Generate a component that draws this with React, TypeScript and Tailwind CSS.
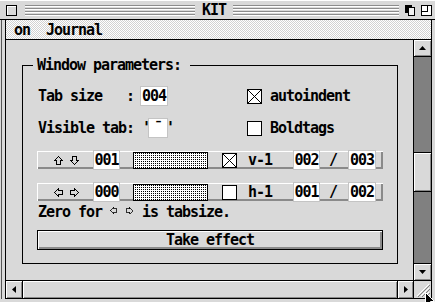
import React from "react";

const font =
  "font-['DejaVu_Sans_Mono',monospace] font-bold text-[15px] leading-4 tracking-[-1.03px] text-black";

type Dir = "up" | "down" | "left" | "right";

function Arrow({ dir, size = 9 }: { dir: Dir; size?: number }) {
  const rot = { up: 0, right: 90, down: 180, left: 270 }[dir];
  return (
    <svg width={size} height={size} viewBox="0 0 9 9" shapeRendering="crispEdges" className="block shrink-0">
      <path
        d="M4.5 0.5 L8.5 4.5 L6.5 4.5 L6.5 8.5 L2.5 8.5 L2.5 4.5 L0.5 4.5 Z"
        fill="none"
        stroke="#000"
        transform={`rotate(${rot} 4.5 4.5)`}
      />
    </svg>
  );
}

function Field({ className = "", children }: { className?: string; children: React.ReactNode }) {
  return (
    <span className={`h-[20px] shrink-0 flex items-center justify-center bg-white border border-[#c4c4c4] ${className}`}>
      {children}
    </span>
  );
}

function Check({ on }: { on?: boolean }) {
  return (
    <span className="w-[15px] h-[15px] shrink-0 border border-black bg-white flex">
      {on && (
        <svg width="13" height="13" viewBox="0 0 13 13" className="block">
          <path d="M0 0L13 13M13 0L0 13" stroke="#000" strokeWidth="1" />
        </svg>
      )}
    </span>
  );
}

function ParamRow(props: {
  arrows: [Dir, Dir];
  pos: string;
  checked?: boolean;
  label: string;
  a: string;
  b: string;
}) {
  return (
    <div className="mt-[12px] h-[20px] flex items-center">
      <div className="w-[346px] h-[18px] flex items-center bg-[#d9d9d9] shadow-[inset_1px_1px_0_#fff,inset_-2px_-2px_0_#8a8a8a]">
        <span className="w-[56px] h-full shrink-0 flex items-center pl-[17px] gap-[7px]">
          <Arrow dir={props.arrows[0]} />
          <Arrow dir={props.arrows[1]} />
        </span>
        <Field className="w-[27px]">{props.pos}</Field>
        <span className="ml-[13px] w-[75px] h-[17px] shrink-0 border border-black bg-[conic-gradient(#000_0_25%,#fff_0)] bg-size-[2px_2px]" />
        <span className="ml-[14px] flex">
          <Check on={props.checked} />
        </span>
        <span className="ml-[11px] w-[24px] shrink-0">{props.label}</span>
        <Field className="ml-[21px] w-[27px]">{props.a}</Field>
        <span className="ml-[9px] w-[8px] shrink-0">/</span>
        <Field className="ml-[11px] w-[28px]">{props.b}</Field>
      </div>
    </div>
  );
}

const lines =
  "h-[11px] bg-[repeating-linear-gradient(to_bottom,#8c8c8c_0px,#8c8c8c_1px,#fff_1px,#fff_2px,transparent_2px,transparent_3px)]";
const bevel = "bg-[#d9d9d9] shadow-[inset_1px_1px_0_#fff,inset_-1px_-1px_0_#8a8a8a]";

export default function App() {
  return (
    <div className={`relative w-[435px] h-[302px] overflow-hidden bg-[#d9d9d9] flex flex-col ${font}`}>
      {/* title bar */}
      <div className="h-[20px] shrink-0 flex items-center border-t border-t-white border-b border-b-black">
        <div className="ml-[6px] w-[11px] h-[11px] shrink-0 border border-black bg-[#d9d9d9] shadow-[inset_1px_1px_0_#fff]" />
        <div className={`ml-[8px] w-[170px] shrink-0 ${lines}`} />
        <div className="w-[38px] shrink-0 text-center">KIT</div>
        <div className={`w-[166px] shrink-0 ${lines}`} />
        <svg width="10" height="11" viewBox="0 0 10 11" shapeRendering="crispEdges" className="ml-[6px] block shrink-0">
          <rect x="0" y="0" width="7" height="8" fill="#000" />
          <rect x="3.5" y="2.5" width="6" height="8" fill="#f2f2f2" stroke="#000" />
        </svg>
        <svg width="11" height="11" viewBox="0 0 11 11" shapeRendering="crispEdges" className="ml-[6px] block shrink-0">
          <rect x="0.5" y="0.5" width="10" height="10" fill="#fff" stroke="#000" />
          <path d="M1 6.5H6.5V1" fill="none" stroke="#000" />
        </svg>
      </div>

      <div className="flex-1 flex min-h-0">
        <div className="w-[5px] shrink-0 pl-[1px] pb-[3px]">
          <div className="w-px h-full bg-[#555]" />
        </div>

        <div className="w-[427px] shrink-0 mb-[3px] flex flex-col border-l border-r border-b border-black">
          {/* menu bar */}
          <div className="h-[20px] shrink-0 flex items-center pl-[8px] whitespace-pre border-b border-black bg-[repeating-conic-gradient(#fff_0_25%,#d2d2d2_0_50%)] bg-size-[2px_2px]">
            on  Journal
          </div>

          <div className="h-[240px] shrink-0 flex">
            {/* work area */}
            <div className="w-[407px] shrink-0 pt-[17px] pl-[16px]">
              <fieldset className="w-[376px] border border-black">
                <legend className="ml-[10px] pl-[4px] pr-[9px]">Window parameters:</legend>
                <div className="px-[14px] pb-[13px]">
                  <div className="mt-[13px] h-[20px] flex items-center pl-[1px]">
                    <div className="w-[209px] shrink-0 flex items-center whitespace-pre">
                      <span>Tab size   :</span>
                      <Field className="ml-[6px] w-[28px]">004</Field>
                    </div>
                    <Check on />
                    <span className="ml-[8px]">autoindent</span>
                  </div>

                  <div className="mt-[12px] h-[20px] flex items-center pl-[1px]">
                    <div className="w-[209px] shrink-0 flex items-center whitespace-pre">
                      <span>Visible tab: '</span>
                      <Field className="ml-[-2px] w-[20px]">¯</Field>
                      <span className="ml-[-2px]">'</span>
                    </div>
                    <Check />
                    <span className="ml-[8px]">Boldtags</span>
                  </div>

                  <ParamRow arrows={["up", "down"]} pos="001" checked label="v-1" a="002" b="003" />
                  <ParamRow arrows={["left", "right"]} pos="000" label="h-1" a="001" b="002" />

                  <div className="mt-[2px] h-[16px] flex items-start pl-[1px] whitespace-pre">
                    <span>Zero for </span>
                    <span className="w-[8px] pt-[3px] flex">
                      <Arrow dir="left" size={7} />
                    </span>
                    <span> </span>
                    <span className="w-[8px] pt-[3px] flex">
                      <Arrow dir="right" size={7} />
                    </span>
                    <span> is tabsize.</span>
                  </div>

                  <button className="mt-[10px] h-[20px] w-[346px] flex items-center justify-center border border-black bg-[#d9d9d9] shadow-[inset_1px_1px_0_#fff,inset_-2px_-2px_0_#8a8a8a]">
                    Take effect
                  </button>
                </div>
              </fieldset>
            </div>

            {/* vertical scrollbar */}
            <div className="w-[18px] shrink-0 border-l border-black flex flex-col">
              <div className={`h-[17px] shrink-0 border-b border-black flex items-center justify-center ${bevel}`}>
                <svg width="7" height="4" viewBox="0 0 7 4" className="block">
                  <polygon points="3.5,0 7,4 0,4" fill="#000" />
                </svg>
              </div>
              <div className="h-[206px] shrink-0 bg-[#808080] flex flex-col">
                <div className={`mt-[95px] h-[40px] shrink-0 border-y border-black ${bevel}`} />
              </div>
              <div className={`h-[17px] shrink-0 border-t border-black flex items-center justify-center ${bevel}`}>
                <svg width="7" height="4" viewBox="0 0 7 4" className="block">
                  <polygon points="0,0 7,0 3.5,4" fill="#000" />
                </svg>
              </div>
            </div>
          </div>

          {/* horizontal scrollbar */}
          <div className="h-[18px] shrink-0 border-t border-black flex">
            <div className={`w-[17px] shrink-0 border-r border-black flex items-center justify-center ${bevel}`}>
              <svg width="4" height="7" viewBox="0 0 4 7" className="block">
                <polygon points="0,3.5 4,0 4,7" fill="#000" />
              </svg>
            </div>
            <div className={`flex-1 ${bevel}`} />
            <div className={`w-[16px] shrink-0 border-l border-black flex items-center justify-center ${bevel}`}>
              <svg width="4" height="7" viewBox="0 0 4 7" className="block">
                <polygon points="0,0 4,3.5 0,7" fill="#000" />
              </svg>
            </div>
            <div className="w-[18px] shrink-0 border-l border-black bg-[#d9d9d9] flex">
              <svg width="17" height="17" viewBox="0 0 17 17" className="block">
                <path d="M3 15L15 3M7 15L15 7M11 15L15 11" stroke="#fff" />
                <path d="M4 16L16 4M8 16L16 8M12 16L16 12" stroke="#808080" />
              </svg>
            </div>
          </div>
        </div>
        <div className="w-[3px] shrink-0" />
      </div>

      {/* mouse pointer */}
      <svg width="12" height="16" viewBox="0 0 12 16" className="absolute left-[425px] top-[292px] block">
        <polygon points="0.5,0.5 0.5,13 3.5,10 5.5,14.5 7.5,13.5 5.5,9.5 9.5,9.5" fill="#000" stroke="#fff" />
      </svg>
    </div>
  );
}
